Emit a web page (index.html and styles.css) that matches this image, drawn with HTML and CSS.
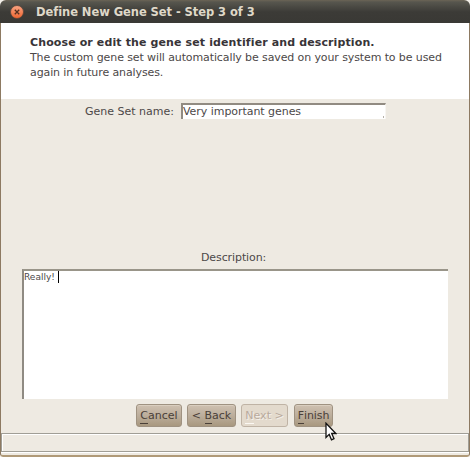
FILE: index.html
```
<!DOCTYPE html>
<html lang="en">
<head>
<meta charset="utf-8">
<title>Define New Gene Set - Step 3 of 3</title>
<link rel="stylesheet" href="styles.css">
</head>
<body>
<div class="window">
  <div class="titlebar">
    <svg class="close" width="14" height="14" viewBox="0 0 14 14">
      <defs><linearGradient id="orange" x1="0" y1="0" x2="0" y2="1"><stop offset="0" stop-color="#f9a584"/><stop offset="1" stop-color="#f0642e"/></linearGradient></defs>
      <circle cx="7" cy="7" r="6.5" fill="url(#orange)" stroke="#5a4438" stroke-width=".8"/>
      <path d="M4.8 4.8l4.4 4.4M9.2 4.8L4.8 9.2" stroke="#56301f" stroke-width="1.3"/>
    </svg>
    <span class="title">Define New Gene Set - Step 3 of 3</span>
  </div>
  <div class="frame">
    <div class="header">
      <div class="heading">Choose or edit the gene set identifier and description.</div>
      <div class="intro">The custom gene set will automatically be saved on your system to be used</div>
      <div class="intro">again in future analyses.</div>
    </div>
    <div class="name-row">
      <span class="label">Gene Set name:</span>
      <div class="field"><span>Very important genes</span><i class="corner"></i></div>
    </div>
    <div class="description-label">Description:</div>
    <div class="textarea"><span>Really!</span><i class="caret"></i></div>
    <div class="buttons">
      <div class="button cancel"><span><u>C</u>ancel</span></div>
      <div class="button back"><span>&lt; <u>B</u>ack</span></div>
      <div class="button next"><span><u>N</u>ext &gt;</span></div>
      <div class="button finish"><span><u>F</u>inish</span></div>
    </div>
    <div class="status"></div>
  </div>
  <svg class="cursor" width="12" height="20" viewBox="0 0 12 20">
    <path d="M1 1.2v14.2l3.2-3 2.3 5.4 2.5-1.1-2.3-5.2h4.2z" fill="#fff" stroke="#111" stroke-width="1.3"/>
  </svg>
</div>
</body>
</html>
```
FILE: styles.css
```
* { box-sizing: border-box; }
body {
  margin: 0;
  background: #f4f0ea;
  font-family: "DejaVu Sans", sans-serif;
  font-size: 11px;
  color: #4c4848;
}
.window {
  position: relative;
  width: 470px;
  height: 457px;
  overflow: hidden;
  border-radius: 6px 6px 3px 3px;
}
.titlebar {
  height: 23px;
  display: flex;
  align-items: center;
  padding: 1px 0 0 10px;
  background: linear-gradient(#6b6455 0, #57564e 2px, #3c3b37 12px, #3a3935 22px);
}
.close { flex: none; margin-right: 12px; }
.title {
  font-weight: bold;
  font-size: 11.5px;
  letter-spacing: -0.06px;
  line-height: 14px;
  color: #dfd8c8;
  white-space: nowrap;
}
.frame {
  height: 434px;
  border: 1px solid #8d7a62;
  border-top: 0;
  border-bottom: 2px solid #b09a78;
  border-radius: 0 0 3px 3px;
  background: #eeeae2;
  display: flex;
  flex-direction: column;
}
.header {
  height: 76px;
  padding: 13px 0 0 29px;
  background: #fff;
  white-space: nowrap;
}
.heading { font-weight: bold; letter-spacing: 0.12px; line-height: 14px; color: #383438; }
.intro { letter-spacing: -0.11px; line-height: 15px; }
.name-row {
  display: flex;
  margin-top: 4px;
  padding-left: 84px;
  height: 17px;
}
.label { width: 96px; line-height: 17px; white-space: nowrap; }
.field {
  display: flex;
  justify-content: space-between;
  align-items: flex-end;
  width: 205px;
  height: 16px;
  border-top: 2px solid #918b82;
  border-left: 2px solid #918b82;
  border-right: 1px solid #f8f6f2;
  background: #fff;
  line-height: 14px;
  letter-spacing: -0.05px;
}
.corner { width: 1px; height: 2px; margin: 0 1px 1px 0; background: #b5b0a8; }
.description-label { margin: 131px 0 0 200px; line-height: 14px; letter-spacing: -0.1px; }
.textarea {
  display: flex;
  margin: 4px 0 0 21px;
  width: 426px;
  height: 130px;
  border-top: 2px solid #999589;
  border-left: 2px solid #8f8b83;
  background: #fff;
  font-size: 9px;
  line-height: 12px;
}
.caret { width: 1px; height: 12px; margin-left: 3px; background: #000; }
.buttons { display: flex; gap: 5px; margin: 5px 0 0 135px; }
.button {
  height: 23px;
  border: 1px solid #9f9281;
  border-radius: 3px;
  background: linear-gradient(#cec0b0, #bcae9c 50%, #a8987f);
  box-shadow: inset 0 1px #d9cebf;
  line-height: 21px;
  text-align: center;
  white-space: nowrap;
  color: #4a4038;
}
.button u { text-decoration: none; display: inline-block; line-height: 14px; border-bottom: 1px solid currentColor; }
.cancel { width: 46px; }
.back { width: 49px; }
.next { width: 47px; background: #e3dacd; border-color: #bfb3a5; color: #b9aa9d; box-shadow: none; text-shadow: 1px 1px #f5f0e9; }
.button.next u { border-bottom-color: #fbf8f3; }
.finish { width: 39px; margin-left: 1px; letter-spacing: -0.1px; }
.status {
  margin-top: 6px;
  height: 19px;
  border: 1px solid #a09e96;
  box-shadow: inset 1px 1px #fff, 0 1px #fff;
}
.cursor { position: absolute; left: 325px; top: 422px; }
```
